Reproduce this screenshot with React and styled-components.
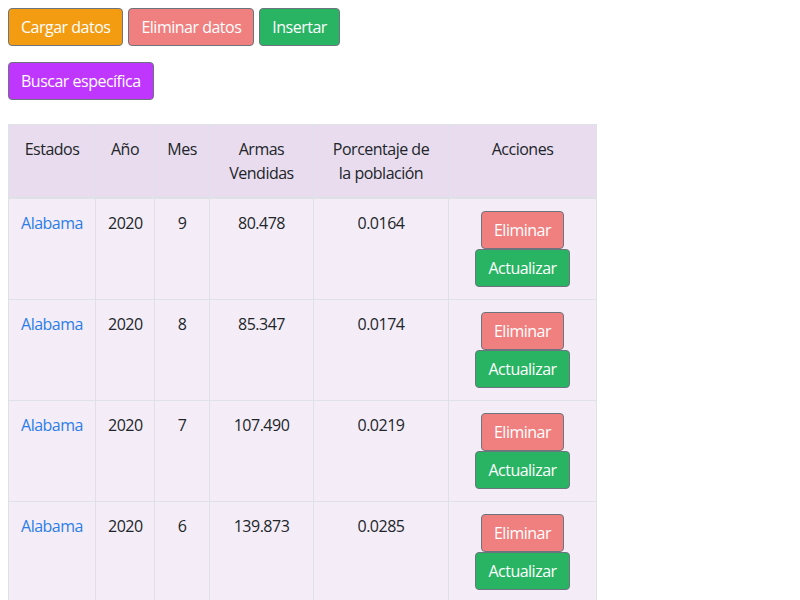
import React from 'react';
import styled, { createGlobalStyle } from 'styled-components';

const GlobalStyle = createGlobalStyle`
  body {
    margin: 8px;
    font-family: "Segoe UI", "Open Sans", "Noto Sans", sans-serif;
    font-size: 16px;
    line-height: 24px;
    letter-spacing: -0.5px;
    color: #212529;
    background: #fff;
  }
`;

const colors = {
  orange: '#f39c12',
  pink: '#f08080',
  green: '#28b463',
  purple: '#bf36ff',
};

const Toolbar = styled.div`
  display: flex;
  gap: 5px;
  margin-bottom: 16px;
`;

const Button = styled.button`
  font-family: inherit;
  font-size: 16px;
  line-height: 24px;
  letter-spacing: inherit;
  padding: 6px 12px;
  color: #fff;
  background: ${props => colors[props.variant]};
  border: 1px solid #6c757d;
  border-radius: 4px;
  cursor: pointer;
  white-space: nowrap;
`;

const Table = styled.table`
  width: 588px;
  table-layout: fixed;
  border-collapse: collapse;
  margin-top: 24px;
`;

const Head = styled.thead`
  background: #e8dcee;
`;

const Body = styled.tbody`
  background: #f4edf8;
`;

const Th = styled.th`
  font-weight: 400;
  text-align: center;
  vertical-align: top;
  padding: 12px;
  border: 1px solid #dee2e6;
  border-bottom-width: 2px;
`;

const Td = styled.td`
  text-align: center;
  vertical-align: top;
  padding: 12px;
  border: 1px solid #dee2e6;
`;

const StateLink = styled.a`
  color: #2b7de9;
  text-decoration: none;
`;

const Actions = styled.div`
  display: flex;
  flex-direction: column;
  align-items: center;
`;

const rows = [
  { estado: 'Alabama', anio: 2020, mes: 9, armas: '80.478', pct: '0.0164' },
  { estado: 'Alabama', anio: 2020, mes: 8, armas: '85.347', pct: '0.0174' },
  { estado: 'Alabama', anio: 2020, mes: 7, armas: '107.490', pct: '0.0219' },
  { estado: 'Alabama', anio: 2020, mes: 6, armas: '139.873', pct: '0.0285' },
];

const widths = [87, 59, 55, 104, 135, 148];

const App = () => (
  <>
    <GlobalStyle />
    <Toolbar>
      <Button variant="orange">Cargar datos</Button>
      <Button variant="pink">Eliminar datos</Button>
      <Button variant="green">Insertar</Button>
    </Toolbar>
    <Toolbar>
      <Button variant="purple">Buscar específica</Button>
    </Toolbar>
    <Table>
      <colgroup>
        {widths.map((w, i) => <col key={i} style={{ width: w }} />)}
      </colgroup>
      <Head>
        <tr>
          <Th>Estados</Th>
          <Th>Año</Th>
          <Th>Mes</Th>
          <Th>Armas Vendidas</Th>
          <Th>Porcentaje de la población</Th>
          <Th>Acciones</Th>
        </tr>
      </Head>
      <Body>
        {rows.map((r, i) => (
          <tr key={i}>
            <Td><StateLink href="#">{r.estado}</StateLink></Td>
            <Td>{r.anio}</Td>
            <Td>{r.mes}</Td>
            <Td>{r.armas}</Td>
            <Td>{r.pct}</Td>
            <Td>
              <Actions>
                <Button variant="pink">Eliminar</Button>
                <Button variant="green">Actualizar</Button>
              </Actions>
            </Td>
          </tr>
        ))}
      </Body>
    </Table>
  </>
);

export default App;
